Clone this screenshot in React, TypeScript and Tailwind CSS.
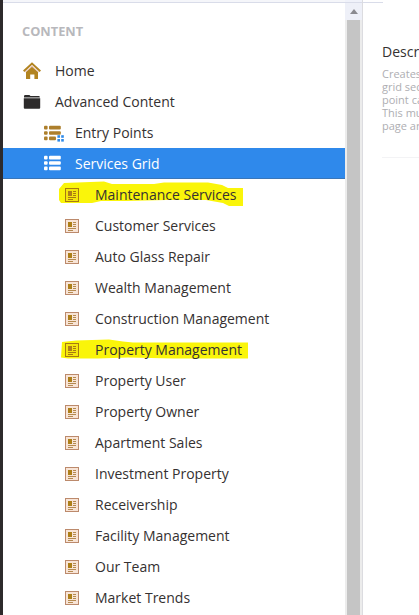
const services = [
  { label: 'Maintenance Services', mark: 'first' },
  { label: 'Customer Services' },
  { label: 'Auto Glass Repair' },
  { label: 'Wealth Management' },
  { label: 'Construction Management' },
  { label: 'Property Management', mark: 'second' },
  { label: 'Property User' },
  { label: 'Property Owner' },
  { label: 'Apartment Sales' },
  { label: 'Investment Property' },
  { label: 'Receivership' },
  { label: 'Facility Management' },
  { label: 'Our Team' },
  { label: 'Market Trends' },
]

function HomeIcon() {
  return (
    <svg className="w-[18px] h-[18px] shrink-0" viewBox="0 0 18 18">
      <path d="M3 9.8 9 4.5l6 5.3V17h-3.6v-4.6H7.2V17H3z" fill="#b28420" />
      <path d="M.7 9.3 9 1.6l8.3 7.7" fill="none" stroke="#b28420" strokeWidth="2" />
      <path d="M2.2 10.2 9 4.1l6.8 6.1" fill="none" stroke="#e8c7b8" strokeWidth="1.1" />
    </svg>
  )
}

function FolderIcon() {
  return (
    <svg className="w-[18px] h-[18px] shrink-0" viewBox="0 0 18 18">
      <path d="M1 4.4V3.2Q1 2 2.2 2H6q1 0 1.4 1h8.4q1 0 1 1v.4z" fill="#2d2b2b" />
      <path d="M.8 5.2h16.4v9.6q0 1-1 1H1.8q-1 0-1-1z" fill="#2d2b2b" />
    </svg>
  )
}

function ListIcon({ color, dots }: { color: string; dots?: boolean }) {
  return (
    <svg className="w-[20px] h-[18px] shrink-0" viewBox="0 0 20 18">
      <g fill={color}>
        <rect x="0" y="1.8" width="3.6" height="3.6" rx="1" />
        <rect x="0" y="7.2" width="3.6" height="3.6" rx="1" />
        <rect x="0" y="12.6" width="3.6" height="3.6" rx="1" />
        <rect x="5" y="1.8" width="11.8" height="3.6" rx="1" />
        <rect x="5" y="7.2" width="11.8" height="3.6" rx="1" />
        <rect x="5" y="12.6" width={dots ? 7 : 11.8} height="3.6" rx="1" />
      </g>
      {dots && (
        <g fill="#2f8ae8">
          <rect x="13.4" y="11.2" width="2.6" height="2.6" />
          <rect x="17.2" y="11.2" width="2.6" height="2.6" />
          <rect x="13.4" y="15" width="2.6" height="2.6" />
          <rect x="17.2" y="15" width="2.6" height="2.6" />
        </g>
      )}
    </svg>
  )
}

function PageIcon({ marked }: { marked?: boolean }) {
  return (
    <svg className="relative w-[14px] h-[14px] shrink-0" viewBox="0 0 14 14">
      <rect x=".5" y=".5" width="13" height="13" fill={marked ? '#f5e60c' : '#f8e4d6'} stroke={marked ? '#a87a12' : '#bc8a6c'} />
      <rect x="3" y="3" width="4" height="5" fill="#ad7f18" />
      <path d="M8 3.5h3M8 5.5h3M8 7.5h3M3 9.5h8M3 11.5h5" stroke={marked ? '#a87a12' : '#b58a50'} />
    </svg>
  )
}

// Marker strokes that sit behind a row
function Highlight({ mark }: { mark: string }) {
  return (
    <svg className="absolute left-[53px] top-0 w-[192px] h-[31px]" viewBox="0 0 192 31">
      {mark === 'first' ? (
        <path d="M3 10l5-6 40-1.5 8 2.5h42l10-1.500h44l14 2.500 6 3h15v18h-14l-6-3-17-3H110l-40 1H45l-9 2H5l-2-3z" fill="#faf50a" />
      ) : (
        <path d="M6 8l14-1.500 33-1 14 2 10 1h115v16h-75l-45-1-30 1H12l-7-1z" fill="#faf50a" />
      )}
    </svg>
  )
}

export default function App() {
  return (
    <div className="flex w-full h-[615px] overflow-hidden bg-white font-['Open_Sans',sans-serif] text-[14px] text-[#353131]">
      <div className="w-[3px] shrink-0 bg-[#2d2a2b]" />

      {/* Content tree */}
      <aside className="w-[342px] shrink-0">
        <div className="h-[3px] bg-[#f5f6fa] border-b border-[#d9dce9]" />
        <h2 className="h-[52px] pt-[20px] pl-[19px] text-[12.8px] leading-[16px] font-bold text-[#b8b8bc]">CONTENT</h2>
        <nav>
          <div className="flex items-center h-[31px] pl-5 gap-[14px]">
            <HomeIcon />
            <span>Home</span>
          </div>
          <div className="flex items-center h-[31px] pl-5 gap-[14px]">
            <FolderIcon />
            <span>Advanced Content</span>
          </div>
          <div className="flex items-center h-[31px] pl-[41px] gap-[11px]">
            <ListIcon color="#ad7f2c" dots />
            <span>Entry Points</span>
          </div>
          <div className="flex items-center h-[31px] pl-[41px] gap-[11px] bg-[#2f89eb] border-b border-[#3a76b8] text-white">
            <ListIcon color="#ffffff" />
            <span>Services Grid</span>
          </div>
          {services.map(item => (
            <div key={item.label} className="relative flex items-center h-[31px] pl-[62px] gap-4">
              {item.mark && <Highlight mark={item.mark} />}
              <PageIcon marked={!!item.mark} />
              <span className="relative">{item.label}</span>
            </div>
          ))}
        </nav>
      </aside>

      {/* Scrollbar */}
      <div className="w-[18px] shrink-0 flex flex-col bg-[#ececec] border-r border-[#dcdce0]">
        <div className="h-[3px] shrink-0 bg-[#f0f2fa] border-b border-[#d9dce9]" />
        <div className="h-[17px] shrink-0 flex items-center justify-center bg-[#eef0f8]">
          <svg className="w-2 h-[5px]" viewBox="0 0 8 5">
            <path d="M0 5 4 0l4 5z" fill="#8b8b90" />
          </svg>
        </div>
        <div className="grow w-[13px] ml-[2px] bg-[#c5c5c5]" />
      </div>

      {/* Property description */}
      <section className="grow min-w-0 overflow-hidden">
        <div className="w-5 h-[3px] border-b border-[#d9dce9]" />
        <div className="ml-[19px] h-[155px] pt-[39px] border-b border-[#f3f3f5] whitespace-nowrap">
          <h3 className="text-[14px] leading-[20px]">Descr</h3>
          <p className="mt-[5px] text-[11px] leading-[13px] text-[#aeaeb2]">
            Creates<br />grid sec<br />point ca<br />This mu<br />page ar
          </p>
        </div>
      </section>
    </div>
  )
}
